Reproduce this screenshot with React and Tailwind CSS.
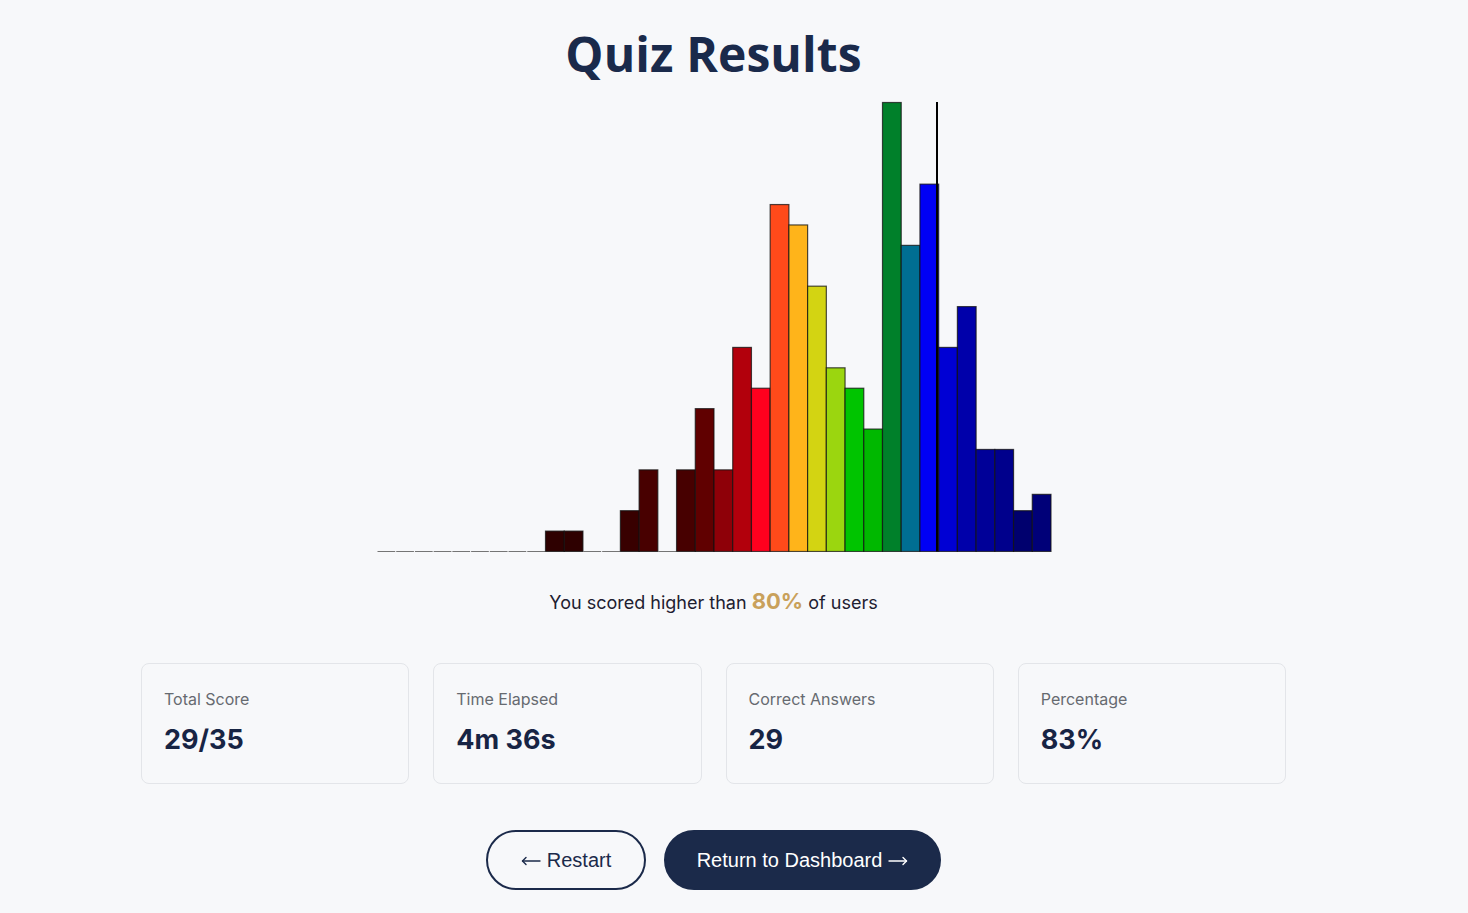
import React from "react";

const BIN_W = 674 / 36;
const UNIT = 449 / 22;
const counts = [0,0,0,0,0,0,0,0,0,1,1,0,0,2,4,0,4,7,4,10,8,17,16,13,9,8,6,22,15,18,10,12,5,5,2,2.8];
const colors = {
  9: "#2e0000", 10: "#2e0000", 13: "#380000", 14: "#480000", 16: "#470000",
  17: "#600000", 18: "#8e0008", 19: "#b2000c", 20: "#ff001e", 21: "#ff4a1a",
  22: "#ffb41a", 23: "#d3d412", 24: "#9bd60f", 25: "#00c400", 26: "#00b800",
  27: "#00802a", 28: "#006e92", 29: "#0000f5", 30: "#0000d4", 31: "#0000aa",
  32: "#000098", 33: "#00008c", 34: "#00006e", 35: "#000078",
};

function Histogram() {
  return (
    <svg width="676" height="451" viewBox="-1 -1 676 451" className="block">
      {counts.map((c, i) => {
        const x = i * BIN_W;
        if (c === 0) {
          return (
            <line key={i} x1={x + 0.5} x2={x + BIN_W - 0.5} y1={449.5} y2={449.5} stroke="#555" strokeWidth="1" opacity="0.8" />
          );
        }
        const h = c * UNIT;
        return (
          <rect key={i} x={x} y={449.5 - h} width={BIN_W} height={h} fill={colors[i]} stroke="#111" strokeOpacity="0.75" strokeWidth="1.2" />
        );
      })}
      <line x1={560} x2={560} y1={0} y2={449.5} stroke="#000" strokeWidth="2" />
    </svg>
  );
}

function Arrow({ dir }) {
  return (
    <svg width="20" height="12" viewBox="0 0 20 12" className="inline-block" fill="none" stroke="currentColor" strokeWidth="1.4" strokeLinecap="round" strokeLinejoin="round">
      {dir === "left" ? (
        <>
          <path d="M1.5 6H19" />
          <path d="M5 2.5L1.5 6L5 9.5" />
        </>
      ) : (
        <>
          <path d="M1 6H18.5" />
          <path d="M15 2.5L18.5 6L15 9.5" />
        </>
      )}
    </svg>
  );
}

function Card({ label, value }) {
  return (
    <div className="h-[121px] rounded-lg border border-[#e3e5e9] bg-[#f7f8fa] px-[22px] pt-[23px]">
      <div className="text-[16px] leading-[24px] text-[#666a70]">{label}</div>
      <div className="mt-[11px] text-[27px] font-bold leading-[36px] text-[#172444]">{value}</div>
    </div>
  );
}

export default function App() {
  return (
    <div className="min-h-screen bg-[#f7f8fa] font-['Inter',sans-serif]">
      <div className="flex w-[1427px] flex-col items-center pt-[24px] pb-[23px]">
        <h1 className="font-['Open_Sans',sans-serif] text-[48px] font-bold leading-[60px] tracking-[0.1px] text-[#1a2a4b]">
          Quiz Results
        </h1>
        <div className="mt-[17px]">
          <Histogram />
        </div>
        <p className="mt-[37px] text-[18px] leading-[28px] text-[#1e2030]">
          You scored higher than{" "}
          <span className="text-[22px] font-bold leading-none text-[#c9a15b]">80%</span>{" "}
          of users
        </p>
        <div className="mt-[46px] grid w-[1145px] grid-cols-4 gap-6">
          <Card label="Total Score" value="29/35" />
          <Card label="Time Elapsed" value="4m 36s" />
          <Card label="Correct Answers" value="29" />
          <Card label="Percentage" value="83%" />
        </div>
        <div className="mt-[46px] flex gap-[18px] font-['Liberation_Sans',sans-serif] text-[20px]">
          <button className="flex h-[60px] w-[160px] items-center justify-center gap-[6px] rounded-full border-2 border-[#1b2a4a] bg-transparent leading-[26px] text-[#1b2a4a]">
            <span className="mt-[2px] flex"><Arrow dir="left" /></span>
            <span>Restart</span>
          </button>
          <button className="flex h-[60px] w-[277px] items-center justify-center gap-[6px] rounded-full border-2 border-[#1b2a4a] bg-[#1b2a4a] leading-[26px] text-white">
            <span>Return to Dashboard</span>
            <span className="mt-[2px] flex"><Arrow dir="right" /></span>
          </button>
        </div>
      </div>
    </div>
  );
}
